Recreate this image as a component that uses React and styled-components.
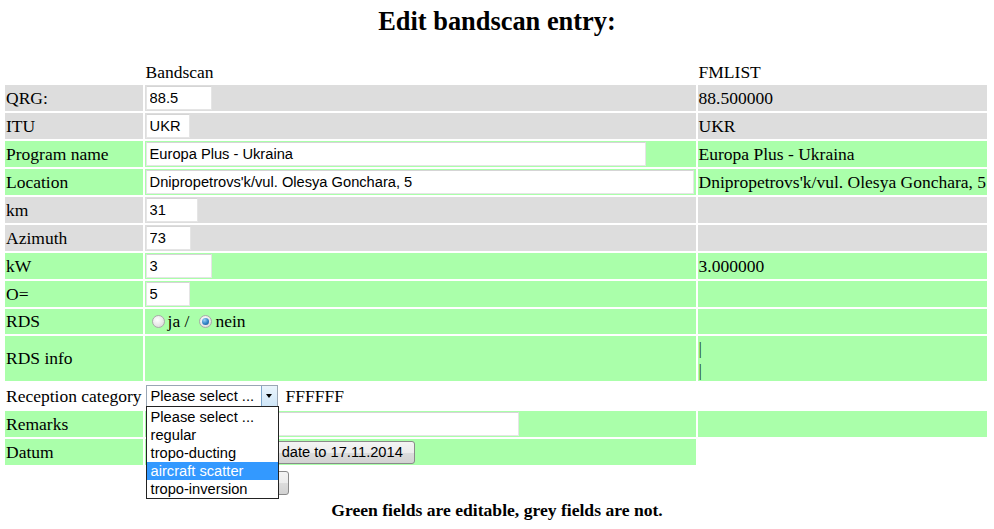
import React from "react";
import styled, { createGlobalStyle } from "styled-components";

const GlobalStyle = createGlobalStyle`
  body {
    margin: 0;
    background: #ffffff;
    font-family: "Liberation Serif", "Times New Roman", serif;
    font-size: 17.5px;
    color: #000;
  }
`;

const Page = styled.div`
  position: relative;
  padding: 0 3px;
`;

const Title = styled.h2`
  margin: 6px 0 23px;
  font-size: 26.4px;
  font-weight: bold;
  text-align: center;
  line-height: 30px;
`;

const Table = styled.table`
  border-collapse: separate;
  border-spacing: 2px;
  margin: 0;
  font-size: 17.5px;
`;

const COLORS = { grey: "#dddddd", green: "#aaffaa", none: "transparent" };

const Cell = styled.td`
  background: ${(p) => COLORS[p.$bg || "none"]};
  height: ${(p) => p.$h || 26}px;
  padding: 0 1px ${(p) => p.$pb || 0}px;
  vertical-align: ${(p) => p.$va || "middle"};
  white-space: nowrap;
  box-sizing: border-box;
  &.c1 { width: 137px; }
  &.c2 { width: 551px; }
  &.c3 { width: 289px; }
`;

const HeadCell = styled.td`
  height: 22px;
  padding: 0 1px;
  vertical-align: middle;
`;

const TextInput = styled.input`
  display: block;
  box-sizing: border-box;
  width: ${(p) => p.$w}px;
  height: 24px;
  margin: 0;
  padding: 0 3px;
  border: 1px solid rgba(0, 0, 0, 0.1);
  border-top-color: rgba(0, 0, 0, 0.16);
  background: #fff;
  font-family: "Liberation Sans", Arial, sans-serif;
  font-size: 14.67px;
  color: #000;
  outline: none;
`;

const RadioGroup = styled.div`
  display: flex;
  align-items: center;
  padding-left: 6px;
`;

const Radio = styled.span`
  display: inline-block;
  box-sizing: border-box;
  width: 13px;
  height: 13px;
  border-radius: 50%;
  border: 1px solid #a9a9a9;
  background: radial-gradient(circle at 40% 35%, #ffffff 0%, #e8e8e8 55%, #cfcfcf 100%);
  position: relative;
  margin-right: 3px;
  &::after {
    content: "";
    display: ${(p) => (p.$checked ? "block" : "none")};
    position: absolute;
    left: 2px;
    top: 2px;
    width: 7px;
    height: 7px;
    border-radius: 50%;
    background: radial-gradient(circle at 35% 30%, #9ad2f5 0%, #2e83c6 55%, #1a4f8c 100%);
  }
`;

const RadioLabel = styled.span`
  margin-right: 10px;
`;

const InfoLines = styled.div`
  line-height: 22px;
  color: #1d4d1d;
  padding-top: 1px;
`;

const SelectWrap = styled.div`
  position: relative;
  display: inline-block;
  vertical-align: middle;
`;

const SelectBox = styled.div`
  display: flex;
  align-items: stretch;
  box-sizing: border-box;
  width: 132px;
  height: 22px;
  border: 1px solid #9aa6b4;
  background: #fff;
  font-family: "Liberation Sans", Arial, sans-serif;
  font-size: 14.67px;
`;

const SelectText = styled.span`
  flex: 1;
  padding-left: 4px;
  line-height: 20px;
`;

const SelectArrow = styled.span`
  width: 15px;
  border-left: 1px solid #7ea7cc;
  background: linear-gradient(#eaf4fc, #cfe6f8);
  display: flex;
  align-items: center;
  justify-content: center;
  &::after {
    content: "";
    border-left: 3px solid transparent;
    border-right: 3px solid transparent;
    border-top: 4px solid #000;
  }
`;

const SelectNote = styled.span`
  margin-left: 8px;
  vertical-align: middle;
`;

const OptionList = styled.ul`
  position: absolute;
  left: 0;
  top: 21px;
  z-index: 5;
  box-sizing: border-box;
  width: 133px;
  margin: 0;
  padding: 1px 0 0;
  list-style: none;
  background: #fff;
  border: 1px solid #222;
  font-family: "Liberation Sans", Arial, sans-serif;
  font-size: 14.67px;
`;

const Option = styled.li`
  height: 18px;
  line-height: 19px;
  padding-left: 4px;
  background: ${(p) => (p.$active ? "#3399ff" : "transparent")};
  color: ${(p) => (p.$active ? "#fff" : "#000")};
`;

const DatumRow = styled.div`
  display: flex;
  align-items: center;
  gap: 6px;
`;

const Button = styled.button`
  display: block;
  box-sizing: border-box;
  height: ${(p) => p.$h || 23}px;
  width: ${(p) => (p.$w ? p.$w + "px" : "auto")};
  margin: 0;
  padding: 0 11px 0 7px;
  text-align: ${(p) => p.$align || "center"};
  border: 1px solid #8a8a8a;
  border-radius: 3px;
  background: linear-gradient(#f4f4f4 0%, #ececec 50%, #dcdcdc 51%, #d2d2d2 100%);
  font-family: "Liberation Sans", Arial, sans-serif;
  font-size: 14.67px;
  color: #000;
`;

const Footnote = styled.p`
  margin: 1px 0 0;
  text-align: center;
  font-weight: bold;
  font-size: 17.6px;
`;

const fieldRows = [
  { label: "QRG:", bg: "grey", value: "88.5", w: 66, fm: "88.500000" },
  { label: "ITU", bg: "grey", value: "UKR", w: 44, fm: "UKR" },
  { label: "Program name", bg: "green", value: "Europa Plus - Ukraina", w: 500, fm: "Europa Plus - Ukraina" },
  { label: "Location", bg: "green", value: "Dnipropetrovs'k/vul. Olesya Gonchara, 5", w: 548, fm: "Dnipropetrovs'k/vul. Olesya Gonchara, 5" },
  { label: "km", bg: "grey", value: "31", w: 52, fm: "" },
  { label: "Azimuth", bg: "grey", value: "73", w: 45, fm: "" },
  { label: "kW", bg: "green", value: "3", w: 66, fm: "3.000000" },
  { label: "O=", bg: "green", value: "5", w: 44, fm: "" },
];

const categories = ["Please select ...", "regular", "tropo-ducting", "aircraft scatter", "tropo-inversion"];

const App = () => {
  return (
    <>
      <GlobalStyle />
      <Page>
        <Title>Edit bandscan entry:</Title>
        <Table>
          <tbody>
            <tr>
              <HeadCell />
              <HeadCell>Bandscan</HeadCell>
              <HeadCell>FMLIST</HeadCell>
            </tr>
            {fieldRows.map((row) => (
              <tr key={row.label}>
                <Cell className="c1" $bg={row.bg}>{row.label}</Cell>
                <Cell className="c2" $bg={row.bg}>
                  <TextInput $w={row.w} defaultValue={row.value} />
                </Cell>
                <Cell className="c3" $bg={row.bg}>{row.fm}</Cell>
              </tr>
            ))}
            <tr>
              <Cell className="c1" $bg="green" $h={25}>RDS</Cell>
              <Cell className="c2" $bg="green" $h={25}>
                <RadioGroup>
                  <Radio />
                  <RadioLabel>ja /</RadioLabel>
                  <Radio $checked />
                  <span>nein</span>
                </RadioGroup>
              </Cell>
              <Cell className="c3" $bg="green" $h={25} />
            </tr>
            <tr>
              <Cell className="c1" $bg="green" $h={45}>RDS info</Cell>
              <Cell className="c2" $bg="green" $h={45} />
              <Cell className="c3" $bg="green" $h={45}>
                <InfoLines>
                  |<br />|
                </InfoLines>
              </Cell>
            </tr>
            <tr>
              <Cell className="c1">Reception category</Cell>
              <Cell className="c2">
                <SelectWrap>
                  <SelectBox>
                    <SelectText>Please select ...</SelectText>
                    <SelectArrow />
                  </SelectBox>
                  <OptionList>
                    {categories.map((c) => (
                      <Option key={c} $active={c === "aircraft scatter"}>{c}</Option>
                    ))}
                  </OptionList>
                </SelectWrap>
                <SelectNote>FFFFFF</SelectNote>
              </Cell>
              <Cell className="c3" />
            </tr>
            <tr>
              <Cell className="c1" $bg="green">Remarks</Cell>
              <Cell className="c2" $bg="green">
                <TextInput $w={373} defaultValue="" />
              </Cell>
              <Cell className="c3" $bg="green" />
            </tr>
            <tr>
              <Cell className="c1" $bg="green">Datum</Cell>
              <Cell className="c2" $bg="green">
                <DatumRow>
                  <TextInput $w={96} defaultValue="17.11.2014" />
                  <Button $w={167} $align="right">Set date to 17.11.2014</Button>
                </DatumRow>
              </Cell>
            </tr>
            <tr>
              <Cell className="c1" $h={30} />
              <Cell className="c2" $h={30} $va="bottom" $pb={2}>
                <Button $h={24} $w={143}>Save</Button>
              </Cell>
            </tr>
          </tbody>
        </Table>
        <Footnote>Green fields are editable, grey fields are not.</Footnote>
      </Page>
    </>
  );
};

export default App;
